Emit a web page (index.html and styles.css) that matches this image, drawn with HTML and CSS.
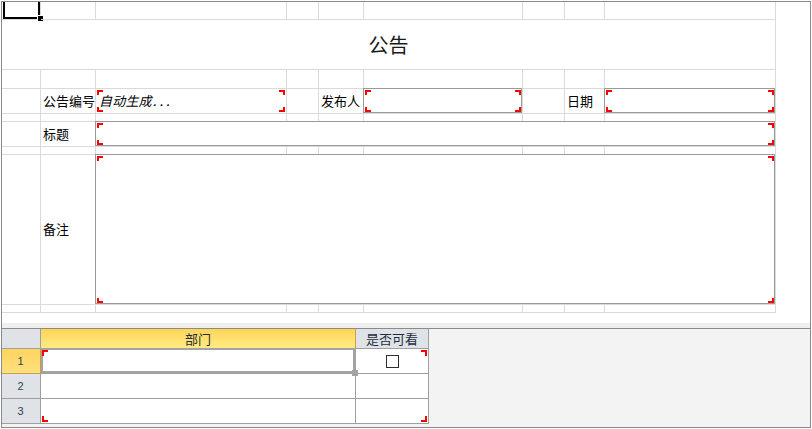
FILE: index.html
```html
<!DOCTYPE html>
<html lang="zh-CN">
<head>
    <meta http-equiv="Content-Type" content="text/html; charset=utf-8" />
    <link rel="stylesheet" href="styles.css">
    <title>公告</title>
</head>
<body>
<div class="app">
    <div class="top-pane">
        <div class="form">
            <!-- row 0 -->
            <div class="c sel"><i class="sel-box"></i><i class="sel-handle"></i></div>
            <div class="c"></div><div class="c"></div><div class="c"></div><div class="c"></div>
            <div class="c"></div><div class="c"></div><div class="c"></div><div class="c"></div>
            <!-- row 1 -->
            <div class="c title span-all">公告</div>
            <!-- row 2 -->
            <div class="c"></div><div class="c"></div><div class="c"></div><div class="c"></div><div class="c"></div>
            <div class="c"></div><div class="c"></div><div class="c"></div><div class="c"></div>
            <!-- row 3 -->
            <div class="c"></div>
            <div class="c label">公告编号</div>
            <div class="c field corners"><span class="hint">自动生成<span class="dots">...</span></span></div>
            <div class="c"></div>
            <div class="c label">发布人</div>
            <div class="c field corners boxed"></div>
            <div class="c"></div>
            <div class="c label">日期</div>
            <div class="c field corners boxed"></div>
            <!-- row 4 -->
            <div class="c"></div><div class="c"></div><div class="c"></div><div class="c"></div><div class="c"></div>
            <div class="c"></div><div class="c"></div><div class="c"></div><div class="c"></div>
            <!-- row 5 -->
            <div class="c"></div>
            <div class="c label">标题</div>
            <div class="c field corners boxed span-7"></div>
            <!-- row 6 -->
            <div class="c"></div><div class="c"></div><div class="c"></div><div class="c"></div><div class="c"></div>
            <div class="c"></div><div class="c"></div><div class="c"></div><div class="c"></div>
            <!-- row 7 -->
            <div class="c"></div>
            <div class="c label">备注</div>
            <div class="c field corners boxed span-7"></div>
            <!-- row 8 -->
            <div class="c"></div><div class="c"></div><div class="c"></div><div class="c"></div><div class="c"></div>
            <div class="c"></div><div class="c"></div><div class="c"></div><div class="c"></div>
        </div>
    </div>
    <div class="splitter"></div>
    <div class="bottom-pane">
        <div class="sub">
            <div class="h corner"></div>
            <div class="h hot-col">部门</div>
            <div class="h">是否可看</div>

            <div class="rh hot-row">1</div>
            <div class="d active"><i class="act-box"></i><i class="act-handle"></i></div>
            <div class="d check"><span class="box"></span></div>

            <div class="rh">2</div>
            <div class="d"></div>
            <div class="d"></div>

            <div class="rh">3</div>
            <div class="d"></div>
            <div class="d"></div>

            <div class="sub-marks"></div>
        </div>
    </div>
</div>
</body>
</html>
```

FILE: styles.css
```css
*{margin:0;padding:0;box-sizing:border-box;}
body{background:#fff;font:13px/1.4 "Noto Sans CJK SC","Liberation Sans",sans-serif;color:#000;}
i{display:block;font-style:normal;}

.app{width:810px;height:427px;margin:1px 0 0 1px;border:1px solid #8a8a8a;display:flex;flex-direction:column;}
.top-pane{height:321px;flex-shrink:0;background:#fff;overflow:hidden;}
.splitter{height:6px;flex-shrink:0;background:#efefef;border-bottom:1px solid #8a8a8a;}
.bottom-pane{flex:1;background:#f3f3f3;overflow:hidden;}

/* upper sheet */
.form{display:grid;grid-template-columns:39px 55px 191px 32px 45px 159px 42px 40px 171px;grid-template-rows:18px 50px 19px 25px 8px 25px 8px 150px 8px;width:774px;}
.form .c{border-right:1px solid #dadada;border-bottom:1px solid #dadada;position:relative;}
.span-all{grid-column:span 9;}
.span-7{grid-column:span 7;}
.title{display:flex;align-items:center;justify-content:center;font-size:20px;color:#1a1a1a;padding-top:1px;}
.label{display:flex;align-items:center;padding-left:2px;white-space:nowrap;}
.field{display:flex;align-items:center;}
.hint{font-style:italic;padding-left:3px;letter-spacing:0.2px;}
.hint .dots{letter-spacing:3px;padding-left:1px;}
.boxed::before{content:"";position:absolute;top:-1px;left:-1px;right:0;bottom:0;border:1px solid #9a9a9a;}
.corners{background:
    linear-gradient(#f00,#f00) left 1px top 1px/6px 2px no-repeat,
    linear-gradient(#f00,#f00) left 1px top 1px/2px 5px no-repeat,
    linear-gradient(#f00,#f00) right 1px top 1px/6px 2px no-repeat,
    linear-gradient(#f00,#f00) right 1px top 1px/2px 5px no-repeat,
    linear-gradient(#f00,#f00) left 1px bottom 1px/6px 2px no-repeat,
    linear-gradient(#f00,#f00) left 1px bottom 1px/2px 5px no-repeat,
    linear-gradient(#f00,#f00) right 1px bottom 1px/6px 2px no-repeat,
    linear-gradient(#f00,#f00) right 1px bottom 1px/2px 5px no-repeat;}

.sel-box{position:absolute;left:1px;top:-2px;right:0;bottom:0;border:2px solid #000;}
.sel-handle{position:absolute;left:35px;top:13px;width:7px;height:7px;background:#000;border:1px solid #fff;}

/* sub table */
.sub{display:grid;grid-template-columns:39px 315px 73px;grid-template-rows:20px 25px 25px 25px;width:427px;position:relative;}
.sub .h,.sub .rh,.sub .d{border-right:1px solid #9f9f9f;border-bottom:1px solid #9f9f9f;}
.h{background:#dfe3e8;color:#1f2c3a;display:flex;align-items:center;justify-content:center;line-height:19px;}
.h.hot-col{background:linear-gradient(#ffd558,#ffeb82);border-bottom-color:#e1ac48;border-right-color:#c9a24e;}
.rh{background:#dfe3e8;color:#33404e;display:flex;align-items:center;justify-content:center;font:11px "Liberation Sans",sans-serif;padding-right:1px;}
.rh.hot-row{background:linear-gradient(#ffd35e,#ffe07e);border-right-color:#c99c3e;border-bottom-color:#c9a24e;}
.d{background:#fff;position:relative;}
.check{display:flex;align-items:center;justify-content:center;padding-left:1px;}
.box{display:block;width:13px;height:13px;border:1px solid #2e2e2e;}
.act-box{position:absolute;top:-1px;left:0;right:-1px;bottom:0;border:2px solid #a3a3a3;border-right-width:3px;}
.act-handle{position:absolute;right:-3px;bottom:-3px;width:6px;height:6px;background:#a3a3a3;z-index:1;}
.sub-marks{position:absolute;grid-column:2/4;grid-row:2/5;top:0;left:0;right:0;bottom:0;pointer-events:none;background:
    linear-gradient(#f00,#f00) left 1px top 1px/6px 2px no-repeat,
    linear-gradient(#f00,#f00) left 1px top 1px/2px 6px no-repeat,
    linear-gradient(#f00,#f00) right 2px top 1px/6px 2px no-repeat,
    linear-gradient(#f00,#f00) right 2px top 1px/2px 6px no-repeat,
    linear-gradient(#f00,#f00) left 1px bottom 2px/6px 2px no-repeat,
    linear-gradient(#f00,#f00) left 1px bottom 2px/2px 6px no-repeat,
    linear-gradient(#f00,#f00) right 2px bottom 2px/6px 2px no-repeat,
    linear-gradient(#f00,#f00) right 2px bottom 2px/2px 6px no-repeat;}
```
